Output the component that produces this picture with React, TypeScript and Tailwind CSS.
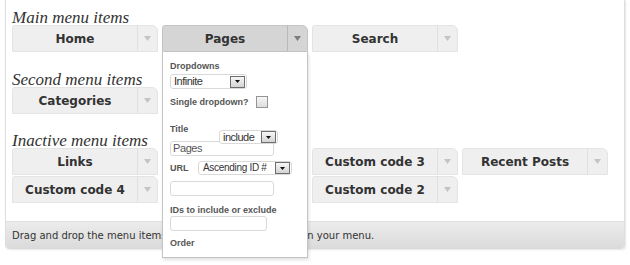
import React from 'react';

const Arrow = ({ dark }: { dark?: boolean }) => (
  <svg width="7" height="5" viewBox="0 0 7 5">
    <polygon points="0,0 7,0 3.5,5" fill={dark ? '#7c7c7c' : '#c4c4c4'} />
  </svg>
);

const MenuItem = ({ label, active }: { label: string; active?: boolean }) => (
  <div
    className={`flex h-[27px] w-[146px] rounded-tl-[3px] rounded-tr-[6px] border ${
      active ? 'border-[#c4c4c4] bg-[#d5d5d5]' : 'border-[#e4e4e4] bg-[#efefef]'
    }`}
  >
    <div className="flex flex-1 items-center justify-center font-['DejaVu_Sans'] text-[12px] font-bold text-[#333]">
      {label}
    </div>
    <div
      className={`flex w-[20px] items-center justify-center border-l ${
        active ? 'border-[#b9b9b9]' : 'border-[#e0e0e0]'
      }`}
    >
      <Arrow dark={active} />
    </div>
  </div>
);

const Heading = ({ children }: { children: React.ReactNode }) => (
  <h2 className="h-[14px] font-['Liberation_Serif'] text-[17px] italic leading-[14px] text-[#333]">
    {children}
  </h2>
);

const Select = ({ value, className }: { value: string; className: string }) => (
  <div
    className={`flex items-center justify-between overflow-hidden rounded-[3px] border border-[#d9d9d9] bg-white pl-[3px] font-['Liberation_Sans'] text-[#333] ${className}`}
  >
    <span className="whitespace-nowrap leading-none">{value}</span>
    <div className="mr-[1px] flex h-[12px] w-[15px] flex-none items-center justify-center border border-[#6e6e6e] bg-linear-to-b from-[#f7f7f7] to-[#d4d4d4]">
      <svg width="5" height="3" viewBox="0 0 5 3">
        <polygon points="0,0 5,0 2.5,3" fill="#111" />
      </svg>
    </div>
  </div>
);

const Input = ({ value, className }: { value?: string; className: string }) => (
  <div
    className={`flex h-[15px] items-center rounded-[3px] border border-[#d9d9d9] bg-white pl-[2px] font-['Liberation_Sans'] text-[11px] tracking-[-0.4px] text-[#555] ${className}`}
  >
    {value}
  </div>
);

const Label = ({ children, className = '' }: { children: React.ReactNode; className?: string }) => (
  <div className={`h-[10px] font-['Liberation_Sans'] text-[9px] font-bold leading-[10px] text-[#555] ${className}`}>
    {children}
  </div>
);

const Dropdown = () => (
  <div className="absolute left-0 top-full z-10 flex h-[206px] w-[146px] flex-col overflow-hidden border-x border-b border-[#c4c4c4] bg-white pl-[7px] pt-[9px] shadow-[1px_2px_3px_rgba(0,0,0,0.12)]">
    <Label>Dropdowns</Label>
    <Select value="Infinite" className="mt-[3px] h-[15px] w-[77px] text-[11px] tracking-[-0.5px]" />
    <div className="mt-[7px] flex h-[12px] items-center">
      <Label className="w-[86px]">Single dropdown?</Label>
      <div className="h-[12px] w-[12px] border border-[#959595] bg-linear-to-b from-[#f6f6f6] to-[#dedede]" />
    </div>
    <div className="mt-[16px] flex">
      <Label className="w-[49px]">Title</Label>
      <Select
        value="include"
        className="relative z-10 mt-[6px] h-[14px] w-[59px] text-[11px] tracking-[-0.5px]"
      />
    </div>
    <Input value="Pages" className="-mt-[3px] w-[104px]" />
    <div className="mt-[5px] flex items-center">
      <Label className="w-[28px]">URL</Label>
      <Select value="Ascending ID #" className="h-[14px] w-[94px] pl-[4px] text-[10px] tracking-[-0.3px]" />
    </div>
    <Input className="mt-[6px] w-[104px]" />
    <Label className="mt-[9px]">IDs to include or exclude</Label>
    <Input className="mt-[1px] w-[97px]" />
    <Label className="mt-[7px]">Order</Label>
  </div>
);

export default function App() {
  return (
    <div className="h-[265px] w-[630px] bg-white">
      <div className="ml-[5px] flex w-[620px] flex-col rounded-b-[4px] border-x border-[#dedede] shadow-[1px_1px_2px_rgba(0,0,0,0.1)]">
        <div className="flex flex-col pl-[6px] pt-[11px]">
          <Heading>Main menu items</Heading>
          <div className="flex gap-[4px]">
            <MenuItem label="Home" />
            <div className="relative">
              <MenuItem label="Pages" active />
              <Dropdown />
            </div>
            <MenuItem label="Search" />
          </div>

          <div className="mt-[21px]">
            <Heading>Second menu items</Heading>
          </div>
          <div className="flex gap-[4px]">
            <MenuItem label="Categories" />
          </div>

          <div className="mt-[20px]">
            <Heading>Inactive menu items</Heading>
          </div>
          <div className="grid w-[596px] grid-cols-[146px_146px_146px_146px] gap-x-[4px] gap-y-[1px]">
            <MenuItem label="Links" />
            <div />
            <MenuItem label="Custom code 3" />
            <MenuItem label="Recent Posts" />
            <MenuItem label="Custom code 4" />
            <div />
            <MenuItem label="Custom code 2" />
          </div>
          <div className="h-[18px]" />
        </div>
        <div className="flex h-[28px] items-center rounded-b-[4px] border-t border-[#e0e0e0] bg-linear-to-b from-[#ececec] to-[#dadada] pl-[6px] font-['DejaVu_Sans'] text-[10px] text-[#333]">
          Drag and drop the menu items to where you'd want them in your menu.
        </div>
      </div>
    </div>
  );
}
